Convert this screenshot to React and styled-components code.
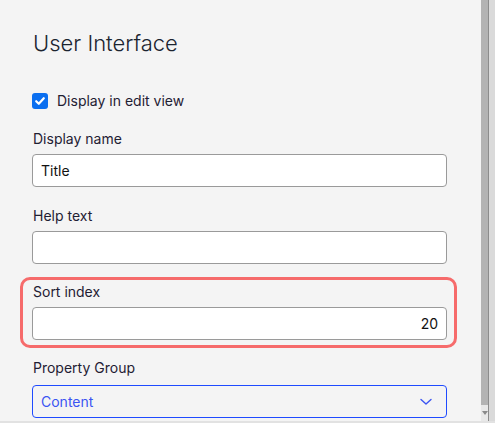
import React from 'react';
import styled, { createGlobalStyle } from 'styled-components';

const GlobalStyle = createGlobalStyle`
  html, body {
    margin: 0;
    padding: 0;
    background: #f4f4f4;
    font-family: Inter, "Noto Sans", sans-serif;
  }
`;

const Page = styled.div`
  display: flex;
  height: 423px;
  overflow: hidden;
  border-bottom: 2px solid #e2e2e2;
  box-sizing: border-box;
`;

const Content = styled.div`
  flex: 1;
  padding: 28px 34px 0 32px;
  display: flex;
  flex-direction: column;
`;

const Title = styled.h2`
  margin: 0 0 0 1px;
  font-size: 22px;
  line-height: 30px;
  font-weight: 300;
  color: #1b2430;
`;

const CheckRow = styled.label`
  display: flex;
  align-items: center;
  gap: 9px;
  margin-top: 33px;
  font-size: 14px;
  line-height: 20px;
  color: #1f2033;
`;

const Box = styled.span`
  width: 16px;
  height: 16px;
  border-radius: 3px;
  background: #0b6ff0;
  display: flex;
  align-items: center;
  justify-content: center;
`;

const Field = styled.div`
  position: relative;
  margin-top: ${(p) => p.$gap ?? 18}px;
  display: flex;
  flex-direction: column;
  gap: ${(p) => p.$inner ?? 5}px;

  ${(p) =>
    p.$highlight &&
    `
    &::before {
      content: "";
      position: absolute;
      top: -5px;
      left: -12px;
      right: -10px;
      bottom: -8px;
      border: 3px solid #f66b6b;
      border-radius: 10px;
      pointer-events: none;
    }
  `}
`;

const Label = styled.div`
  font-size: 14px;
  line-height: 20px;
  color: #1f2033;
  margin-left: 1px;
`;

const Input = styled.div`
  height: 33px;
  box-sizing: border-box;
  border: 1px solid #9a9a9a;
  border-radius: 4px;
  background: #fff;
  display: flex;
  align-items: center;
  justify-content: ${(p) => (p.$right ? 'flex-end' : 'flex-start')};
  padding: 0 8px;
  font-size: 14px;
  color: #111;
`;

const Select = styled.div`
  height: 33px;
  box-sizing: border-box;
  border: 1px solid #1f4bff;
  border-radius: 4px;
  background: #f4f4f4;
  display: flex;
  align-items: center;
  justify-content: space-between;
  padding: 0 14px 0 8px;
  font-size: 14px;
  color: #3b55f2;
`;

const Scrollbar = styled.div`
  width: 14px;
  display: flex;
`;

const Track = styled.div`
  width: 7px;
  display: flex;
  flex-direction: column;
  background: #e8e8e8;
`;

const Thumb = styled.div`
  flex: 1;
  background: #b3b3b3;
`;

const Arrow = styled.div`
  height: 16px;
  display: flex;
  align-items: center;
  justify-content: center;
`;

const Edge = styled.div`
  width: 1px;
  background: #8c8c8c;
`;

const Frame = styled.div`
  flex: 1;
  background: #dadada;
`;

export default function App() {
  return (
    <>
      <GlobalStyle />
      <Page>
        <Content>
          <Title>User Interface</Title>
          <CheckRow>
            <Box>
              <svg width="12" height="12" viewBox="0 0 12 12">
                <path d="M2.2 6.2 L4.8 8.8 L9.8 3.2" fill="none" stroke="#fff" strokeWidth="2.2" strokeLinecap="round" strokeLinejoin="round" />
              </svg>
            </Box>
            Display in edit view
          </CheckRow>
          <Field $gap={18}>
            <Label>Display name</Label>
            <Input>Title</Input>
          </Field>
          <Field $gap={19}>
            <Label>Help text</Label>
            <Input />
          </Field>
          <Field $highlight>
            <Label>Sort index</Label>
            <Input $right>20</Input>
          </Field>
          <Field $inner={7}>
            <Label>Property Group</Label>
            <Select>
              Content
              <svg width="12" height="8" viewBox="0 0 12 8">
                <path d="M1 1.5 L6 6 L11 1.5" fill="none" stroke="#3b55f2" strokeWidth="1.4" strokeLinecap="round" strokeLinejoin="round" />
              </svg>
            </Select>
          </Field>
        </Content>
        <Scrollbar>
          <Track>
            <Thumb />
            <Arrow>
              <svg width="6" height="4" viewBox="0 0 6 4">
                <path d="M0 0 L6 0 L3 4 Z" fill="#8a8a8a" />
              </svg>
            </Arrow>
          </Track>
          <Edge />
          <Frame />
        </Scrollbar>
      </Page>
    </>
  );
}
